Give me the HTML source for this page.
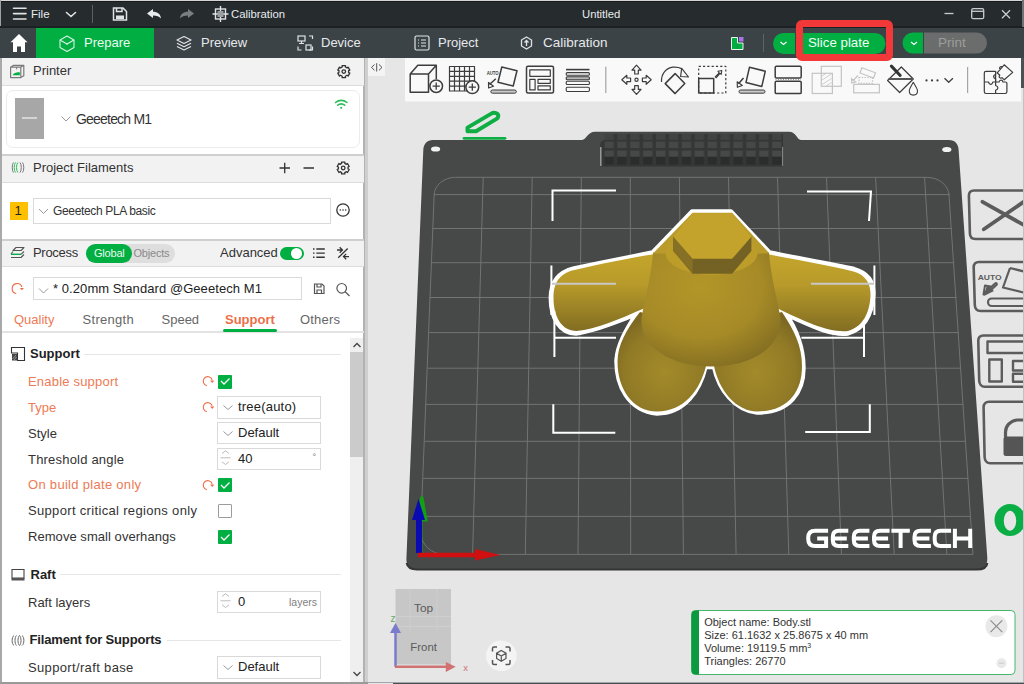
<!DOCTYPE html>
<html><head><meta charset="utf-8">
<style>
*{box-sizing:border-box;margin:0;padding:0}
html,body{width:1024px;height:684px;overflow:hidden;background:#e6e6e6;font-family:"Liberation Sans",sans-serif}
.a{position:absolute;white-space:nowrap}
#title{left:0;top:0;width:1024px;height:28px;background:#262b2e}
#tabs{left:0;top:28px;width:1024px;height:30px;background:#3c4347}
.tt{color:#e8ecee;font-size:11px;line-height:12px}
.tab{color:#e6e9eb;font-size:13px;line-height:14px}
#left{left:0;top:58px;width:364px;height:626px;background:#fff}
.hdr{position:absolute;left:2px;width:362px;background:#f2f2f2;border-bottom:1px solid #dcdcdc}
.ht{color:#333;font-size:13px;line-height:14px}
.lab{color:#333;font-size:13px;line-height:14px}
.or{color:#ee7a55}
.box{position:absolute;border:1px solid #d9d9d9;background:#fff}
.chk{position:absolute;width:14px;height:14px;background:#00ae42;border-radius:1px}
.chk svg{position:absolute;left:0;top:0}
.sec{color:#222;font-weight:bold;font-size:13px;line-height:14px}
.line{position:absolute;height:1px;background:#e6e6e6}
</style></head><body>

<!-- TITLE BAR -->
<div id="title" class="a"></div>
<div class="a" style="left:0;top:0;width:1024px;height:1px;background:#d2d3d4"></div><div class="a" style="left:1px;top:1px;width:1023px;height:1px;background:#17191a"></div><div class="a" style="left:0;top:0;width:1px;height:58px;background:#9ea2a4"></div>
<div class="a" style="left:0;top:26px;width:1024px;height:2px;background:#1d2123"></div>

<svg class="a" style="left:0;top:0" width="1024" height="27">
 <g stroke="#e0e3e5" stroke-width="1.6" fill="none" stroke-linecap="round">
  <path d="M13.5 8.2H26M13.5 13.6H26M13.5 19H26"/>
  <path d="M66.5 12.5L71 16.5L75.5 12.5"/>
 </g>
 <rect x="92" y="5" width="1" height="18" fill="#5a5f62"/>
 <g fill="none" stroke="#e0e3e5" stroke-width="1.5">
  <path d="M113.5 8H123L126.5 11.5V20H113.5Z"/>
  <path d="M116.5 8V11.5H122V8"/>
  <rect x="116" y="15.5" width="8" height="3.5" fill="#e0e3e5" stroke="none"/>
 </g>
 <path d="M147 13.5L153 9V11.8C157.5 11.8 160.5 14 161 18.5C159.3 16.3 156.8 15.4 153 15.4V18Z" fill="#e8ebed"/>
 <path d="M194 13.5L188 9V11.8C183.5 11.8 180.5 14 180 18.5C181.7 16.3 184.2 15.4 188 15.4V18Z" fill="#7a7f82"/>
 <g stroke="#e0e3e5" stroke-width="1.4" fill="none">
  <rect x="215.5" y="9" width="10" height="10"/>
  <path d="M220.5 6V22M212.5 14H228.5"/>
 </g>
 <rect x="217.5" y="11" width="6" height="6" fill="#9a9ea0"/>
 <g stroke="#c9cccd" stroke-width="1.3" fill="none">
  <path d="M944.5 13.5H953.5"/>
  <rect x="971.7" y="8.7" width="12" height="10" rx="1.5"/>
  <path d="M971.7 11.3H983.7"/>
  <path d="M1002 10.3L1010 18.3M1010 10.3L1002 18.3"/>
 </g>
</svg>
<div class="a tt" style="left:31px;top:8px;font-size:11.5px">File</div>
<div class="a tt" style="left:231px;top:8px;font-size:11.3px">Calibration</div>
<div class="a tt" style="left:582px;top:8px;font-size:11.3px">Untitled</div>
<div class="a" style="left:1022px;top:0;width:2px;height:27px;background:#6d7275"></div>

<!-- TAB BAR -->
<div id="tabs" class="a"></div>
<div class="a" style="left:36px;top:28px;width:118px;height:30px;background:#00ae42"></div>
<svg class="a" style="left:0;top:27px" width="1024" height="31">
 <path d="M19 7L10.5 15.3H13V25H17V19.5H21V25H25V15.3H27.5Z" fill="#fff"/>
 <g stroke="#d8f3e2" stroke-width="1.1" fill="none" stroke-linejoin="round">
  <path d="M67 9L74 13V20.5L67 24.5L60 20.5V13Z"/>
  <path d="M60 13L67 17L74 13M67 17V18"/>
 </g>
 <g stroke="#e0e3e5" stroke-width="1.2" fill="none" stroke-linejoin="round">
  <path d="M184 9.5L191 13L184 16.5L177 13Z"/>
  <path d="M177 16.3L184 19.8L191 16.3"/>
  <path d="M177 19.5L184 23L191 19.5"/>
 </g>
 <g stroke="#e0e3e5" stroke-width="1.2" fill="none">
  <rect x="298" y="9" width="7" height="5"/>
  <path d="M301.5 14V16M299 16.5H304"/>
  <path d="M309 9H312.5V12M298 19.5V23H301.5M312.5 19.5V23H309"/>
  <rect x="306" y="18" width="5" height="5"/>
 </g>
 <g stroke="#e0e3e5" stroke-width="1.2" fill="none">
  <rect x="415" y="9" width="14" height="14" rx="1.5"/>
  <path d="M418 13H419M421 13H426M418 16H419M421 16H426M418 19H419M421 19H426"/>
 </g>
 <g stroke="#e0e3e5" stroke-width="1.3" fill="none">
  <path d="M526.5 10L531.5 13V19L526.5 22L521.5 19V13Z"/>
  <path d="M526.5 19V14M524.5 15.5L526.5 13.5L528.5 15.5"/>
 </g>
 <rect x="731.5" y="10.5" width="6" height="12" fill="#00ae42"/>
 <rect x="737.5" y="16" width="5.5" height="6.5" fill="#00ae42"/>
 <path d="M731.5 10.5H737.5V16H743V22.5H731.5Z" fill="none" stroke="#e8f5ec" stroke-width="1"/>
 <rect x="739" y="10" width="4.5" height="4.5" fill="#a872e8"/>
 <rect x="763" y="7" width="1" height="18" fill="#5d6467"/>
 <path d="M783.5 6H795V27H783.5A10.5 10.5 0 0 1 783.5 6Z" fill="#00ae42"/>
 <path d="M780.5 15L783.5 17.5L786.5 15" stroke="#fff" stroke-width="1.2" fill="none"/>
 <path d="M803 6H875A10.5 10.5 0 0 1 875 27H803Z" fill="#00ae42"/>
 <path d="M913 5.5H923V26.5H913A10.5 10.5 0 0 1 913 5.5Z" fill="#00ae42"/>
 <path d="M911 15L914 17.5L917 15" stroke="#fff" stroke-width="1.2" fill="none"/>
 <path d="M924 5.5H976.5A10.5 10.5 0 0 1 976.5 26.5H924Z" fill="#6b6c6c"/>
</svg>
<div class="a tab" style="left:84px;top:36.4px;color:#eafaf0">Prepare</div>
<div class="a tab" style="left:201px;top:36.4px">Preview</div>
<div class="a tab" style="left:321px;top:36.4px">Device</div>
<div class="a tab" style="left:438px;top:36.4px">Project</div>
<div class="a tab" style="left:543px;top:36.2px;font-size:13.5px">Calibration</div>
<div class="a tab" style="left:808px;top:36px;color:#f0fff4;font-size:13.3px">Slice plate</div>
<div class="a tab" style="left:938px;top:36px;color:#9c9d9d;font-size:13.5px">Print</div>

<!-- VIEWPORT -->
<svg class="a" style="left:368px;top:58px" width="656" height="626" viewBox="368 58 656 626">
 <defs>
  <pattern id="vent" x="604.4" y="0" width="12.9" height="700" patternUnits="userSpaceOnUse">
   <rect x="0" y="134" width="9.3" height="5.8" fill="#414343"/>
   <rect x="0" y="141.7" width="9.3" height="6.3" fill="#464848"/>
   <rect x="0" y="150.7" width="9.3" height="5.8" fill="#474949"/>
   <rect x="0" y="157" width="9.3" height="7.7" fill="#2b2d2d"/>
  </pattern>
  <linearGradient id="gold" x1="0" y1="0" x2="1" y2="1">
   <stop offset="0" stop-color="#c9a82c"/>
   <stop offset="1" stop-color="#8d7624"/>
  </linearGradient>
  <radialGradient id="body" cx="0.4" cy="0.3" r="0.8">
   <stop offset="0" stop-color="#bea02b"/>
   <stop offset="0.6" stop-color="#a88c27"/>
   <stop offset="1" stop-color="#7f6a20"/>
  </radialGradient>
 </defs>
 <rect x="368" y="58" width="656" height="626" fill="#e6e6e6"/>
 <!-- collapse btn -->
 <rect x="368" y="58" width="17" height="18" fill="#f4f4f4"/>
 <path d="M374.5 64.5L371.5 67.4L374.5 70.3M379 64.5L382 67.4L379 70.3M376.7 63.2V71.5" fill="none" stroke="#555" stroke-width="1"/>
 <!-- toolbar -->
 <rect x="405" y="58" width="616" height="43.5" fill="#f9f9f9"/>
 <g fill="none" stroke="#3d3d3d" stroke-width="1.5" stroke-linejoin="round">
  <!-- 1 add cube -->
  <path d="M410.2 74H428.5V92.2H410.2Z M410.2 74L417.8 65.2H436.3L428.5 74 M436.3 65.2V79"/>
  <circle cx="436.2" cy="86.2" r="6.3" fill="#f9f9f9"/>
  <path d="M432.6 86.2H439.8M436.2 82.6V89.8" stroke-width="1.3"/>
  <!-- 2 grid -->
  <path d="M449.5 66.5H474.5V91H449.5Z M454.5 66.5V91M459.5 66.5V91M464.5 66.5V91M469.5 66.5V91M449.5 71.4H474.5M449.5 76.3H474.5M449.5 81.2H474.5M449.5 86.1H474.5" stroke-width="1.2"/>
  <circle cx="472.3" cy="87.2" r="6.4" fill="#f9f9f9"/>
  <path d="M468.7 87.2H475.9M472.3 83.6V90.8" stroke-width="1.3"/>
  <!-- 3 auto orient -->
  <path d="M501.8 67L517 70.8L513.2 86L498 82.2Z"/>
  <path d="M495.8 78.8L489.5 84.5"/>
  <path d="M488.5 82.5L488.6 88L493.5 86.2Z" stroke-width="1.2"/>
  <rect x="490.8" y="90" width="25.5" height="3.2" rx="1.6" fill="#c9c9c9" stroke-width="1"/>
  <!-- 4 layout -->
  <rect x="526.5" y="66.3" width="27" height="26.8" rx="1.5"/>
  <rect x="529.8" y="69.8" width="20.5" height="6.5" stroke-width="1.2"/>
  <rect x="529.8" y="79.3" width="5.3" height="10.6" stroke-width="1.2"/>
  <rect x="538" y="79.3" width="12.3" height="4" stroke-width="1.2"/>
  <rect x="538" y="85.8" width="12.3" height="4.1" stroke-width="1.2"/>
  <!-- 5 stack -->
  <rect x="566" y="68.8" width="23.5" height="1.6" fill="#3d3d3d" stroke="none"/>
  <rect x="566.2" y="72.6" width="23.2" height="2.6" rx="1" stroke-width="1.1"/>
  <rect x="566.2" y="76.8" width="23.2" height="3" rx="1" fill="#b8b8b8" stroke-width="1.1"/>
  <rect x="566.2" y="81.3" width="23.2" height="3.2" rx="1" stroke-width="1.1"/>
  <rect x="566.2" y="87.2" width="23.2" height="4.3" rx="1.2" stroke-width="1.1"/>
  <!-- 7 move -->
  <circle cx="636.5" cy="79.8" r="1.6" stroke-width="1.2"/>
  <path d="M636.5 65.2L641 70.2H638.3V74H634.7V70.2H632Z M636.5 94.4L641 89.4H638.3V85.6H634.7V89.4H632Z M621.8 79.8L626.8 75.3V78H630.6V81.6H626.8V84.3Z M651.2 79.8L646.2 75.3V78H642.4V81.6H646.2V84.3Z" stroke-width="1.2"/>
  <!-- 8 rotate -->
  <path d="M675.1 73.6L684.8 83.6L675.1 93.6L665.2 83.6Z"/>
  <path d="M661.5 82C661 74 666 68 673 67.2C677 66.8 679 67.3 681.5 68.6" stroke-width="1.2"/>
  <path d="M681.7 68.4L688.5 77L680.6 76.5Z" stroke-width="1.2"/>
  <!-- 9 scale -->
  <path d="M698.7 66.4H725.8V93H698.7Z" stroke-dasharray="2.2 2.1" stroke-width="1.2"/>
  <path d="M698.7 78.6H713.7V93H698.7Z"/>
  <path d="M715.2 76.8L719.2 72.8L718 71.3L721.8 70.5L721.2 74.4L720 73.3L716.3 77.7Z" stroke-width="1.1"/>
  <!-- 10 lay on face -->
  <path d="M749.5 67.2L765.3 71.2L761.8 86.4L746 82.4Z"/>
  <path d="M743.5 78L738.5 83.8"/>
  <path d="M737.2 81.8L737.4 87.3L742.3 85.5Z" stroke-width="1.2"/>
  <rect x="739" y="90" width="26" height="3.2" rx="1.6" fill="#c9c9c9" stroke-width="1"/>
  <!-- 11 cut -->
  <rect x="775.2" y="66.3" width="26" height="11.6" rx="1.2"/>
  <rect x="775.2" y="81.2" width="26" height="12.4" rx="1.2"/>
  <path d="M775.5 79.5H801" stroke-dasharray="1 1.5" stroke-width=".8" stroke="#777"/>
 </g>
 <g fill="none" stroke="#c4c4c4" stroke-width="1.2">
  <rect x="812.2" y="73.3" width="20.2" height="20.2"/>
  <rect x="821.3" y="66.3" width="20" height="20"/>
  <path d="M822 76L826 73.5M822 80L831.5 74M822 84.5L831.5 78.5M826 86L831.5 82.5" stroke-width=".8"/>
  <path d="M861.8 67.7L875.5 72.8L873.5 78L860 73Z"/>
  <path d="M859 77.5H872.5V83.3H859Z" stroke-dasharray="1.5 1.2"/>
  <rect x="853.7" y="84.4" width="25.7" height="8.4"/>
  <path d="M857.9 75.5L853 80.8M851.5 78.8L851.8 83L855.7 82Z"/>
 </g>
 <g fill="none" stroke="#3d3d3d" stroke-width="1.5" stroke-linejoin="round">
  <!-- 14 bucket -->
  <path d="M887.6 80.5L901.3 67L913.3 79L899.6 92.5Z" stroke-width="1.2"/>
  <path d="M888.5 79H913" stroke-width="2" stroke="#555"/>
  <path d="M891.4 66.1L900.2 75.5" stroke-width="3" stroke="#2f3333" stroke-linecap="round"/>
  <path d="M913.3 82.4C911.5 85.5 909.3 88.8 909.3 91C909.3 93.5 911 95.1 913.3 95.1C915.6 95.1 917.5 93.5 917.5 91C917.5 88.8 915.2 85.5 913.3 82.4Z" stroke-width="1.1"/>
  <!-- chevron -->
  <path d="M944.5 78.2L948.7 82.2L952.9 78.2" stroke-width="1.3"/>
  <!-- puzzle -->
  <path d="M995.6 71.3H986Q984.3 71.3 984.3 73V91.8Q984.3 93.5 986 93.5H1005.2Q1006.9 93.5 1006.9 91.8V83.2Q1006.9 82 1005.5 82H1003C1002.5 80.5 1001.5 80 1000.5 80.3C999.5 80.6 999.2 81.3 999 82H995.6V71.3" stroke-width="1.2"/>
  <path d="M995.6 71.3V74.5C994 75 993.5 76 993.7 77C994 78 995 78.5 995.6 79V82M984.3 82H988.5C989 83.8 990 84.5 991 84.3C992 84.1 992.6 83.2 992.8 82H995.6V85.5C997 86 998 87 997.9 88C997.8 89 997 89.8 995.6 90.3V93.5" stroke-width="1.2"/>
  <path d="M997.2 72.8L1004.2 64.8L1012.7 72.4L1004.2 79.8L1002 77.6C1001.3 78.3 1000.3 78.3 999.6 77.6C999 77 999 76 999.8 75.3L997.2 72.8Z M1000.2 69.5C999.4 68.8 999.4 67.8 1000 67.2C1000.7 66.5 1001.7 66.6 1002.3 67.2" stroke-width="1.2"/>
 </g>
 <g fill="#3d3d3d"><circle cx="926.5" cy="80.4" r="1.1"/><circle cx="932" cy="80.4" r="1.1"/><circle cx="937.5" cy="80.4" r="1.1"/></g>
 <text x="486.7" y="75.3" font-family="Liberation Sans" font-weight="bold" font-size="5.5" fill="#3d3d3d" textLength="12" lengthAdjust="spacingAndGlyphs">AUTO</text>
 <g fill="#a5a5a5">
  <rect x="605.2" y="66.7" width="1.2" height="26.4"/>
  <rect x="967" y="67" width="1.2" height="26"/>
 </g>
 <rect x="1021" y="58" width="3" height="30" fill="#4b5053"/>
 <!-- plate -->
 <path d="M433 140H582C586 140 588 131.8 595 131.8H789C796 131.8 797 140 801 140H949C955 140 958.4 144 958.6 150L987.3 558C987.6 565 984 570 977 570H417C410 570 406.2 566 406.4 559L423.3 150C423.5 144 427 140 433 140Z" fill="#474848"/>
 <path d="M406.6 563C407.5 567.5 411 569.5 417 569.5H977C983 569.5 986.8 567.5 987.4 563" fill="none" stroke="#343535" stroke-width="2"/>
 <path d="M600 166.5V147C600 142 602 140 606 139.5V134H783V166.5Z" fill="#353737"/>
 <rect x="604.4" y="134" width="180" height="31" fill="url(#vent)"/>
 <path d="M600.8 147V166" stroke="#a8a8a8" stroke-width="1.3"/>
 <path d="M782.6 147V166" stroke="#8a8a8a" stroke-width="1"/>
 <ellipse cx="435.6" cy="149" rx="4.6" ry="2.6" fill="#f2f2f2"/>
 <ellipse cx="946.8" cy="149.5" rx="4.6" ry="2.6" fill="#f2f2f2"/>
 <!-- grid -->
 <g fill="none" stroke="#727373" stroke-width="1">
  <path d="M433.8 194.6H949.8 M432.5 228.5H952.0 M431.2 262.7H954.2 M429.9 297.5H956.4 M428.6 332.6H958.7 M427.3 368.2H961.0 M425.9 404.4H963.3 M424.5 441.3H965.7 M423.1 478.4H968.1 M421.7 516.4H970.6 M483.2 177.3L472.6 554.4 M532.2 177.3L525.3 554.4 M581.3 177.3L578.0 554.4 M630.3 177.3L630.7 554.4 M679.4 177.3L683.4 554.4 M728.5 177.3L736.1 554.4 M777.5 177.3L788.8 554.4 M826.5 177.3L841.5 554.4 M875.6 177.3L894.2 554.4 M924.6 177.3L946.9 554.4"/>
  <path d="M455.5 177.3H926C940 177.3 948.5 186 949 195L973 554.4H446C431 554.4 421 545 420.6 531L434.2 194C435 185 444 177.3 455.5 177.3Z"/>
 </g>
 <!-- object -->
 <defs>
  <linearGradient id="armL" x1="0" y1="0" x2="0" y2="1">
   <stop offset="0" stop-color="#c4a52c"/><stop offset="0.4" stop-color="#b79a2a"/><stop offset="1" stop-color="#826d22"/>
  </linearGradient>
  <radialGradient id="leg" cx="0.5" cy="0.6" r="0.6">
   <stop offset="0" stop-color="#a38a2a"/><stop offset="0.7" stop-color="#917a26"/><stop offset="1" stop-color="#7c6822"/>
  </radialGradient>
  <radialGradient id="sph" cx="0.42" cy="0.3" r="0.75">
   <stop offset="0" stop-color="#b39628"/><stop offset="0.6" stop-color="#a68a27"/><stop offset="1" stop-color="#826d22"/>
  </radialGradient>
  <linearGradient id="neck" x1="0" y1="0" x2="1" y2="0">
   <stop offset="0" stop-color="#9b8226"/><stop offset="0.35" stop-color="#b39628"/><stop offset="0.7" stop-color="#ad9128"/><stop offset="1" stop-color="#8f7824"/>
  </linearGradient>
 </defs>
 <path d="M692 211.5L731 211.5L769.5 252.5C795 258 830 263.5 854 269C868 273 874 282 873.3 295C872 312 866 328 848 333.5C830 336 810 325 786 314.5C796 328 803.5 348 803.5 368C803.5 392 790 412.5 757 412.5C735 410.5 719 390 714 367L705.5 367C700 390 685 413.5 657 413.5C628 410.5 616 385 616.5 360C617.5 345 626 330 636 314.5C615 322 596 331 576 333.5C560 333.5 550.8 318 550.8 298C550.8 280 560 272 574 268.5C600 263 630 257 652.5 252.5Z" fill="#fff" stroke="#fff" stroke-width="4.4" stroke-linejoin="round"/>
 <path d="M640 312C626 330 617.5 345 617.5 362C617.5 388 632 411.5 657 411.5C684 411.5 700 390 706 366L712 330Z" fill="url(#leg)"/>
 <path d="M782 312C794 330 802 346 802 366C802 392 788 411 757.5 411.5C735 411 719 390 714 366L710 330Z" fill="url(#leg)"/>
 <path d="M655 254C630 258 600 264 574.5 270C561 273 553.5 281 553.5 298C553.5 317 562 331 576.5 331C597 329 617 320 645 308Z" fill="url(#armL)"/>
 <path d="M767 254C792 259 828 265 853.5 271.5C866 275 871 284 870.5 296C869.5 312 864 326 848 331C830 333 805 322 777 308Z" fill="url(#armL)"/>
 <path d="M653 252.5C651.5 275 645 298 641.5 318C639.5 348 672 366.5 711 366.5C750 366.5 782.5 348 780.5 318C777 298 770.5 275 769 252.5Z" fill="url(#sph)"/>
 <path d="M692.6 212.8H732.1L769.5 253.5H653Z" fill="#b89b2a"/>
 <ellipse cx="711.5" cy="253" rx="46" ry="22" fill="#bc9d2a"/>
 <path d="M673.3 236.8V250.9L692.6 273.7H732.1L751.4 250.9V236.8Z" fill="#746224"/>
 <path d="M673.3 236.8V250.9L692.6 273.7V258.8Z" fill="#857026"/>
 <path d="M692.6 213.2H732.1L751.4 236.8L732.1 258.8H692.6L673.3 236.8Z" fill="#c3a32c"/>
 <!-- brackets -->
 <g fill="none" stroke="#fff" stroke-width="2">
  <path d="M552.5 221V190.6H616M807 191.4H871L869 221M551.4 265.5V315M554.4 311V357M554 337.8H616M874.4 265.5V315M864 322.6V357M801.4 337.8H864M553.3 404.3V432.8H615.3M869.8 404.3V432H805.2"/>
 </g>
 <path d="M552 283.8H616M811 283.8H874" stroke="#c8c8c8" stroke-width="2"/>
 <!-- logo -->
 <path d="M828.1 530.8H815.2Q808.2 530.8 808.2 537.8V539.1Q808.2 546.1 815.2 546.1H826.1V538.5H817.2M848.3 530.8H838.8Q832.8 530.8 832.8 536.8V540.1Q832.8 546.1 838.8 546.1H848.3M832.8 538.5H846.8M869.4 530.8H859.8Q853.8 530.8 853.8 536.8V540.1Q853.8 546.1 859.8 546.1H869.4M853.8 538.5H867.9M889.6 530.8H880.0Q874.0 530.8 874.0 536.8V540.1Q874.0 546.1 880.0 546.1H889.6M874.0 538.5H888.1M891.4 530.8H909.8M900.6 530.8V548.1M930.9 530.8H920.5Q914.5 530.8 914.5 536.8V540.1Q914.5 546.1 920.5 546.1H930.9M914.5 538.5H929.4M951.1 530.8H940.7Q934.7 530.8 934.7 536.8V540.1Q934.7 546.1 940.7 546.1H951.1M954.9 528.8V548.1M970.2 528.8V548.1M954.9 538.5H970.2" fill="none" stroke="#fff" stroke-width="4.0"/>
 <!-- axes -->
 <path d="M421 555V520M417.5 520L421.8 496.8L426 520Z" fill="#13a013" stroke="#13a013" stroke-width="3"/>
 <path d="M419 553V519" stroke="#0a0ab0" stroke-width="6"/>
 <path d="M412 520L418.5 499L425 520Z" fill="#0a0ab0"/>
 <path d="M418 555H476" stroke="#d01010" stroke-width="4.5"/>
 <path d="M475 549L500.5 555L475 560.5Z" fill="#d01010"/>
 <!-- right buttons -->
 <g fill="none" stroke="#5c5c5c" stroke-width="2.6" stroke-linejoin="round">
  <path d="M1030 190.5H974C970.5 190.5 968.8 192.5 968.9 196L969.9 233.5C970 237 972 239 975.5 239H1030"/>
  <path d="M982.5 201.8L1030 228.5M983.8 229.3L1030 197.5" stroke-width="3.8" stroke-linecap="round"/>
  <path d="M1030 262H979C975.5 262 973.6 264 973.7 267.5L974.8 305C974.9 308.5 977 311 980.5 311H1030"/>
  <path d="M1030 335.5H983.5C980 335.5 978.2 337.5 978.3 341L979.2 380.5C979.3 384 981.3 386.8 984.8 386.8H1030"/>
  <path d="M1030 401.8H989C985.5 401.8 983.5 404 983.6 407.5L984.6 457C984.7 460.5 986.8 463.3 990.3 463.3H1030"/>
  <path d="M1010 268L1030 273M1010 268L1003 287.5L1030 294" stroke-width="2.2"/>
  <rect x="988" y="298.5" width="50" height="7.5" rx="3.75" stroke-width="2.2"/>
  <path d="M990.5 286.5L983.5 294.5L985 285.5Z M989 289L995 283.5C996.5 282.5 997.5 284 996.5 285L991 290" stroke-width="2"/>
  <rect x="987.5" y="341.5" width="45" height="11.5" stroke-width="2.4"/>
  <rect x="989.3" y="359.5" width="12.5" height="22" stroke-width="2.4"/>
  <rect x="1013" y="361" width="20" height="9.5" stroke-width="2.4"/>
  <rect x="1013" y="373.8" width="20" height="8" stroke-width="2.4"/>
  <path d="M1005.5 437V432C1005.5 426 1010 421 1017 420H1030" stroke-width="3.2"/>
 </g>
 <path d="M984 296L987 285L994 291Z" fill="#5c5c5c"/>
 <text x="977.7" y="279.5" font-family="Liberation Sans" font-weight="bold" font-size="7.5" fill="#5c5c5c" textLength="24" lengthAdjust="spacingAndGlyphs">AUTO</text>
 <rect x="1003.5" y="436.5" width="30" height="19.5" rx="2.5" fill="#555"/>
 <ellipse cx="1010" cy="520" rx="15.5" ry="16" fill="#0aae45"/><ellipse cx="1010" cy="520.7" rx="6.2" ry="10" fill="#e6e6e6"/>
 <!-- view cube -->
 <rect x="395.5" y="589" width="55.5" height="75.5" fill="#c7c7c7"/>
 <path d="M410 589V630M437 589V630M395.5 616.5H451M395.5 626.5H451" stroke="#d0d0d0" stroke-width=".8"/>
 <text x="414" y="612.2" font-family="Liberation Sans" font-size="10" fill="#5a5a5a" textLength="19" lengthAdjust="spacingAndGlyphs">Top</text>
 <text x="410.3" y="650.8" font-family="Liberation Sans" font-size="10" fill="#5a5a5a" textLength="26.6" lengthAdjust="spacingAndGlyphs">Front</text>
 <path d="M395.5 666.7V632" stroke="#7b7bcc" stroke-width="2.5"/>
 <path d="M390 633L395.5 623L401 633Z" fill="#7b7bcc"/>
 <path d="M395 666.7H446" stroke="#d07272" stroke-width="2.5"/>
 <path d="M445.8 662L455.6 666.7L445.8 671.9Z" fill="#d07272"/>
 <text x="390.5" y="621.5" font-family="Liberation Sans" font-size="10" fill="#6aa86a">z</text>
 <text x="463.3" y="670.5" font-family="Liberation Sans" font-size="9.5" fill="#d07272">x</text>
 <circle cx="501.3" cy="655.8" r="15.3" fill="#f4f4f4"/>
 <g fill="none" stroke="#555" stroke-width="1.5">
  <path d="M492.5 651.5V648.5C492.5 647.5 493 647 494 647H497M505.5 647H508.5C509.5 647 510 647.5 510 648.5V651.5M510 660V663C510 664 509.5 664.5 508.5 664.5H505.5M497 664.5H494C493 664.5 492.5 664 492.5 663V660"/>
  <path d="M501.3 650.5L506 653.2V658.5L501.3 661.2L496.6 658.5V653.2Z M496.6 653.2L501.3 656L506 653.2M501.3 656V661" stroke-width="1.2"/>
 </g>
 <!-- info panel -->
 <rect x="691.5" y="610.5" width="323.5" height="64" rx="4" fill="#fff" stroke="#45b86c" stroke-width="1"/>
 <path d="M695.5 610.5H699V674.5H695.5C693 674.5 691.5 673 691.5 670.5V614.5C691.5 612 693 610.5 695.5 610.5Z" fill="#0d9a3e"/>
 <circle cx="996.4" cy="626.2" r="11" fill="#e9e9e9"/>
 <path d="M990.5 620.3L1002.3 632.1M1002.3 620.3L990.5 632.1" stroke="#8c8c8c" stroke-width="1.2"/>
 <circle cx="1001.5" cy="663.2" r="5" fill="#e9e9e9"/>
 <path d="M999 663.2H1004" stroke="#c8c8c8" stroke-width="1"/>
 <g font-family="Liberation Sans" font-size="11" fill="#333">
  <text x="704.2" y="625.6">Object name: Body.stl</text>
  <text x="704.2" y="638.6">Size: 61.1632 x 25.8675 x 40 mm</text>
  <text x="704.2" y="651.6">Volume: 19119.5 mm<tspan font-size="7" dy="-4">3</tspan></text>
  <text x="704.2" y="664.6">Triangles: 26770</text>
 </g>
 <rect x="368" y="682" width="656" height="1" fill="#a3a6a8"/><rect x="393" y="683" width="631" height="1" fill="#4a4d50"/>
 <rect x="1023" y="88" width="1" height="594" fill="#bfc2c4"/>
 <!-- pencil -->
 <path d="M467.5 131.3V127.6L491.3 113.6C494.3 111.9 498.3 113.1 498.3 116C498.3 117.2 497.6 118.2 496.5 118.9L476 131.3Z" fill="none" stroke="#0fae45" stroke-width="4" stroke-linejoin="round"/>
 <path d="M464 138.3H505" stroke="#0fae45" stroke-width="2.8" stroke-linecap="round"/>
</svg>

<!-- LEFT PANEL -->
<div id="left" class="a"></div>
<div class="a" style="left:0;top:58px;width:2px;height:626px;background:#a9a9a9"></div>
<div class="a" style="left:363px;top:58px;width:5px;height:626px;background:#cfcfcf"></div><div class="a" style="left:363px;top:58px;width:1.6px;height:626px;background:#b2b2b2"></div>
<!-- printer -->
<div class="hdr" style="top:58px;height:28px"></div>
<div class="a" style="left:6px;top:90px;width:354px;height:58px;border:1px solid #ececec;border-radius:7px;background:#fff"></div>
<div class="a" style="left:15px;top:98px;width:29px;height:41px;background:#a7a7a7"></div>
<div class="a" style="left:22px;top:117px;width:15px;height:1.5px;background:#d4d4d4"></div>
<div class="a ht" style="left:33px;top:63.8px">Printer</div>
<div class="a" style="left:76px;top:110.5px;color:#333;font-size:14px;line-height:16px;letter-spacing:-0.8px">Geeetech M1</div>
<!-- filaments -->
<div class="a" style="left:2px;top:154px;width:362px;height:2px;background:#cfcfcf"></div>
<div class="hdr" style="top:156px;height:27px"></div>
<div class="a ht" style="left:33px;top:160.5px">Project Filaments</div>
<div class="a" style="left:10px;top:202px;width:18px;height:18px;background:#ffc000"></div>
<div class="a" style="left:14.5px;top:204px;color:#222;font-size:13px;line-height:14px">1</div>
<div class="box" style="left:33px;top:198px;width:298px;height:26px"></div>
<div class="a" style="left:53px;top:204px;color:#333;font-size:12px;line-height:14px;letter-spacing:-0.35px">Geeetech PLA basic</div>
<!-- process -->
<div class="a" style="left:2px;top:239px;width:362px;height:2px;background:#cfcfcf"></div>
<div class="hdr" style="top:241px;height:26px"></div>
<div class="a ht" style="left:33px;top:245.5px;letter-spacing:-0.3px">Process</div>
<div class="a" style="left:86px;top:244px;width:89px;height:19px;border-radius:9.5px;background:#dedede"></div>
<div class="a" style="left:86px;top:244px;width:46px;height:19px;border-radius:9.5px;background:#00ae42"></div>
<div class="a" style="left:94px;top:247.4px;color:#e8f8ee;font-size:11px;line-height:12px;letter-spacing:-0.2px">Global</div>
<div class="a" style="left:133.5px;top:247.4px;color:#8a8a8a;font-size:11px;line-height:12px;letter-spacing:-0.2px">Objects</div>
<div class="a ht" style="left:220px;top:246px">Advanced</div>
<div class="a" style="left:280px;top:246.5px;width:24px;height:13.5px;border-radius:7px;background:#00ae42"></div>
<div class="a" style="left:291px;top:248px;width:11px;height:10.5px;border-radius:50%;background:#fff"></div>
<div class="box" style="left:33px;top:277px;width:269px;height:23px"></div>
<div class="a" style="left:53px;top:281.5px;color:#222;font-size:13px;line-height:14px;letter-spacing:0.07px">* 0.20mm Standard @Geeetech M1</div>
<div class="a lab or" style="left:14px;top:312.5px">Quality</div>
<div class="a lab" style="left:82.5px;top:312.5px;color:#666;letter-spacing:0.3px">Strength</div>
<div class="a lab" style="left:161.5px;top:312.5px;color:#666">Speed</div>
<div class="a lab or" style="left:225px;top:312.5px;font-weight:bold;color:#ec6f48">Support</div>
<div class="a lab" style="left:300px;top:312.5px;color:#666;letter-spacing:0.2px">Others</div>
<div class="a" style="left:2px;top:331px;width:362px;height:2px;background:#e3e3e3"></div>
<div class="a" style="left:222.5px;top:329px;width:54px;height:3px;border-radius:2px;background:#00ae42"></div>
<!-- scrollbar -->
<div class="a" style="left:350px;top:338px;width:13px;height:344px;background:#efefef"></div>
<div class="a" style="left:350px;top:352px;width:13px;height:105px;background:#cbcbcb"></div>
<!-- support section -->
<div class="a sec" style="left:30px;top:347px">Support</div>
<div class="line" style="left:84px;top:354px;width:257px"></div>
<div class="a lab or" style="left:28px;top:375px;letter-spacing:0.2px">Enable support</div>
<div class="a lab or" style="left:28px;top:401px">Type</div>
<div class="a lab" style="left:28px;top:426.7px">Style</div>
<div class="a lab" style="left:28px;top:452.7px;letter-spacing:0.2px">Threshold angle</div>
<div class="a lab or" style="left:28px;top:478px;letter-spacing:0.3px">On build plate only</div>
<div class="a lab" style="left:28px;top:503.5px;letter-spacing:0.33px">Support critical regions only</div>
<div class="a lab" style="left:28px;top:529.5px;letter-spacing:0.05px">Remove small overhangs</div>
<div class="chk" style="left:218px;top:374.5px"></div>
<div class="box" style="left:217px;top:396px;width:104px;height:23px"></div>
<div class="a lab" style="left:238px;top:400px;color:#222;letter-spacing:0.2px">tree(auto)</div>
<div class="box" style="left:217px;top:422px;width:104px;height:22px"></div>
<div class="a lab" style="left:238px;top:426px;color:#222">Default</div>
<div class="box" style="left:217px;top:448px;width:104px;height:22px"></div>
<div class="a lab" style="left:238px;top:452px;color:#222">40</div>
<div class="a" style="left:312.5px;top:452px;color:#777;font-size:9px">&#176;</div>
<div class="chk" style="left:218px;top:478px"></div>
<div class="a" style="left:218px;top:504px;width:14px;height:14px;border:1px solid #9c9c9c;border-radius:1px"></div>
<div class="chk" style="left:218px;top:530px"></div>
<!-- raft -->
<div class="a sec" style="left:30.5px;top:567.5px">Raft</div>
<div class="line" style="left:60px;top:574px;width:281px"></div>
<div class="a lab" style="left:28px;top:595.7px">Raft layers</div>
<div class="box" style="left:217px;top:591px;width:104px;height:22px"></div>
<div class="a lab" style="left:238px;top:595px;color:#222">0</div>
<div class="a" style="left:289px;top:596px;color:#808080;font-size:10.5px;line-height:12px">layers</div>
<!-- filament for supports -->
<div class="a sec" style="left:29.5px;top:633px;letter-spacing:-0.15px">Filament for Supports</div>
<div class="line" style="left:167px;top:640px;width:174px"></div>
<div class="a lab" style="left:28px;top:661px;letter-spacing:0.35px">Support/raft base</div>
<div class="box" style="left:217px;top:656px;width:104px;height:23px"></div>
<div class="a lab" style="left:238px;top:660px;color:#222">Default</div>
<div class="a" style="left:0;top:682px;width:368px;height:2px;background:#9a9a9a"></div>
<svg class="a" style="left:0;top:58px" width="368" height="626">
 <g fill="none" stroke="#333" stroke-width="1.3">
  <!-- gear printer -->
  <path transform="translate(343.8 13.6)" d="M-1.71 -5.96 L1.71 -5.96 L1.56 -4.65 L3.24 -3.67 L4.30 -4.46 L6.02 -1.50 L4.80 -0.97 L4.80 0.97 L6.02 1.50 L4.30 4.46 L3.24 3.67 L1.56 4.65 L1.71 5.96 L-1.71 5.96 L-1.56 4.65 L-3.24 3.67 L-4.30 4.46 L-6.02 1.50 L-4.80 0.97 L-4.80 -0.97 L-6.02 -1.50 L-4.30 -4.46 L-3.24 -3.67 L-1.56 -4.65Z" stroke-linejoin="round"/>
  <circle cx="343.8" cy="13.6" r="1.8"/>
  <path transform="translate(343.2 110)" d="M-1.71 -5.96 L1.71 -5.96 L1.56 -4.65 L3.24 -3.67 L4.30 -4.46 L6.02 -1.50 L4.80 -0.97 L4.80 0.97 L6.02 1.50 L4.30 4.46 L3.24 3.67 L1.56 4.65 L1.71 5.96 L-1.71 5.96 L-1.56 4.65 L-3.24 3.67 L-4.30 4.46 L-6.02 1.50 L-4.80 0.97 L-4.80 -0.97 L-6.02 -1.50 L-4.30 -4.46 L-3.24 -3.67 L-1.56 -4.65Z" stroke-linejoin="round"/>
  <circle cx="343.2" cy="110" r="1.8"/>
  <!-- plus minus -->
  <path d="M279.5 110H290M284.7 104.7V115.3M303.5 110H314"/>
  <!-- more circle -->
  <circle cx="343" cy="152" r="6.2"/>
 </g>
 <g fill="#333"><circle cx="340.3" cy="152" r=".8"/><circle cx="343" cy="152" r=".8"/><circle cx="345.7" cy="152" r=".8"/></g>
 <!-- printer icon -->
 <g fill="none" stroke="#7a7a7a" stroke-width="1.2" stroke-linejoin="round">
  <path d="M10.6 9.2H20.8V19.6H10.6Z M10.6 9.2L13.6 7.3H23.8L20.8 9.2 M23.8 7.3V17.7L20.8 19.6"/>
  <path d="M16.6 9.2V11.3" stroke-width="1"/>
 </g>
 <path d="M12.6 17.3C13.5 15.5 15 14.3 19.8 14.2V17.3Z" fill="#00ae42"/>
 <!-- wifi -->
 <g fill="none" stroke="#2ebd5b" stroke-width="1.6" stroke-linecap="round">
  <path d="M335.5 44.5A9 9 0 0 1 347 44.5"/>
  <path d="M337.8 47.2A5.5 5.5 0 0 1 344.7 47.2"/>
 </g>
 <circle cx="341.2" cy="49.8" r="1.1" fill="#2ebd5b"/>
 <!-- filament icon -->
 <g fill="none" stroke="#777" stroke-width="1">
  <path d="M13.5 104.5C11.8 106 11.8 113 13.5 114.5M22.5 104.5C24.2 106 24.2 113 22.5 114.5M20 104.5C21.7 106 21.7 113 20 114.5"/>
 </g>
 <g fill="none" stroke="#2ebd5b" stroke-width="1">
  <path d="M15.5 104.5C13.8 106 13.8 113 15.5 114.5M17.8 104.5C16.1 106 16.1 113 17.8 114.5"/>
 </g>
 <!-- process icon -->
 <g fill="none" stroke="#555" stroke-width="1.1" stroke-linejoin="round">
  <path d="M13 192.5L16 189.5H24L21 192.5Z"/>
  <path d="M11 196L13 193.5M21 196.3L24 193.5"/>
  <path d="M11 199.5H21L24 196.5"/>
 </g>
 <path d="M11 196.3H21" stroke="#00ae42" stroke-width="1.4"/>
 <!-- list icon -->
 <g stroke="#333" stroke-width="1.4">
  <path d="M313 191H314.5M316.3 191H324.8M313 195.1H314.5M316.3 195.1H324.8M313 199.2H314.5M316.3 199.2H324.8"/>
 </g>
 <!-- collapse icon -->
 <g stroke="#333" stroke-width="1.3" fill="none">
  <path d="M338.2 199.8L347.7 190.5"/>
  <path d="M337 192H342M339.7 189.3L342.4 192L339.7 194.7"/>
  <path d="M349 198.6H344M346.2 195.9L343.5 198.6L346.2 201.3"/>
 </g>
 <!-- reset icon -->
 <path d="M16.2 235.5A5 5 0 1 1 21.9 229.0" fill="none" stroke="#ee6b43" stroke-width="1.1"/><path d="M19.8 229.9H24.0L21.9 232.3Z" fill="#ee6b43"/>
 <!-- save & search -->
 <g fill="none" stroke="#555" stroke-width="1.2">
  <path d="M314.5 226H322L324 228V235.5H314.5Z"/>
  <path d="M317 226V229H321V226M317 235.5V232H321.5V235.5"/>
  <circle cx="341.7" cy="230.3" r="4.8"/>
  <path d="M345.2 233.8L349.5 238"/>
 </g>
 <!-- chevrons -->
 <g fill="none" stroke="#999" stroke-width="1">
  <path d="M61.5 58.5L66 63L70.5 58.5"/>
  <path d="M39 151L43.5 155.5L48 151"/>
  <path d="M39 230.5L43.5 235L48 230.5"/>
  <path d="M223.5 347.5L228 351.5L232.5 347.5"/>
  <path d="M223.5 373.5L228 377.5L232.5 373.5"/>
  <path d="M223.5 607.5L228 611.5L232.5 607.5"/>
 </g>
 <!-- spinners -->
 <g fill="none" stroke="#aaa" stroke-width="1">
  <path d="M222 395.5L225.5 392.8L229 395.5M222 403.8L225.5 406.5L229 403.8M220.5 399.8H230.5" stroke="#bbb"/>
  <path d="M222 538.5L225.5 535.8L229 538.5M222 546.8L225.5 549.5L229 546.8M220.5 542.8H230.5" stroke="#bbb"/>
 </g>
 <!-- checkmarks -->
 <g fill="none" stroke="#fff" stroke-width="1.3">
  <path d="M221 323L224 326L229.5 320.5"/>
  <path d="M221 427L224 430L229.5 424.5"/>
  <path d="M221 479L224 482L229.5 476.5"/>
 </g>
 <!-- reset icons in rows -->
 <path d="M206.9 327.7A4.6 4.6 0 1 1 212.2 321.7" fill="none" stroke="#ee6b43" stroke-width="1.1"/><path d="M210.1 322.6H214.3L212.2 325.0Z" fill="#ee6b43"/>
 <path d="M206.9 353.7A4.6 4.6 0 1 1 212.2 347.7" fill="none" stroke="#ee6b43" stroke-width="1.1"/><path d="M210.1 348.6H214.3L212.2 351.0Z" fill="#ee6b43"/>
 <path d="M206.9 431.7A4.6 4.6 0 1 1 212.2 425.7" fill="none" stroke="#ee6b43" stroke-width="1.1"/><path d="M210.1 426.6H214.3L212.2 429.0Z" fill="#ee6b43"/>
 <!-- support section icon -->
 <g fill="none" stroke="#333" stroke-width="1.1">
  <path d="M11.5 289.5H24.5V302.5H17.5V295H11.5Z"/>
 </g>
 <path d="M12 296H17V302.5H12Z" fill="#444"/>
 <path d="M12.5 301L16 297M14 302L16.5 299" stroke="#bbb" stroke-width=".7"/>
 <!-- raft icon -->
 <g fill="none" stroke="#444" stroke-width="1.1">
  <path d="M12 511.5H24V520H12Z"/>
 </g>
 <rect x="11.5" y="520" width="13" height="2.5" fill="#555"/>
 <!-- filament support icon -->
 <g fill="none" stroke="#666" stroke-width="1">
  <path d="M14 577.5C11.5 579 11.5 586 14 587.5M22 577.5C24.5 579 24.5 586 22 587.5M16.5 577.5C14.5 579 14.5 586 16.5 587.5M19.5 577.5C17.5 579 17.5 586 19.5 587.5M19.5 577.5C21.5 579 21.5 586 19.5 587.5"/>
 </g>
 <!-- scroll arrows -->
 <g fill="none" stroke="#444" stroke-width="1.3">
  <path d="M353.5 289L357 285.5L360.5 289"/>
  <path d="M353.5 614L357 617.5L360.5 614"/>
 </g>
</svg>

<div class="a" style="left:796px;top:19.5px;width:96.5px;height:41px;border:7px solid #f23838;border-radius:6px 6px 6px 6px"></div>
</body></html>
